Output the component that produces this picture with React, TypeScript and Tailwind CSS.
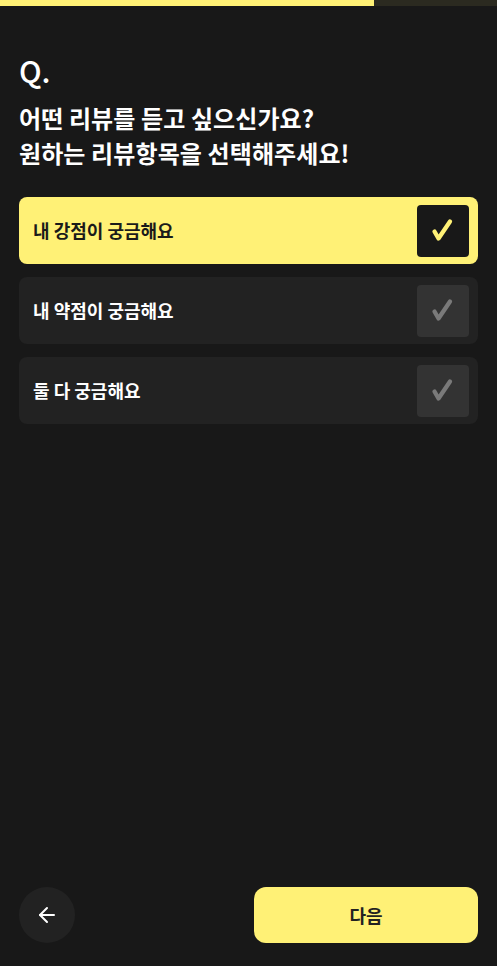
import React from "react";
import { ArrowLeft } from "lucide-react";

function Check({ color }: { color: string }) {
  return (
    <svg width="52" height="52" viewBox="0 0 52 52" fill="none">
      <path
        d="M17.5 26.5 L21.5 33.5 L33 16.5"
        stroke={color}
        strokeWidth="4.3"
        strokeLinecap="round"
        strokeLinejoin="round"
      />
    </svg>
  );
}

const options = [
  { label: "내 강점이 궁금해요", selected: true },
  { label: "내 약점이 궁금해요", selected: false },
  { label: "둘 다 궁금해요", selected: false },
];

export default function App() {
  return (
    <div
      className="w-[497px] h-[966px] bg-[#181818] flex flex-col"
      style={{ fontFamily: '"Noto Sans CJK KR", "Noto Sans", sans-serif' }}
    >
      <div className="flex h-[6px] w-full">
        <div className="w-[374px] bg-[#fff176]" />
        <div className="flex-1 bg-[#2b2a20]" />
      </div>
      <div className="px-[19px] flex flex-col flex-1">
        <div className="mt-[46px] text-[30px] leading-[36px] font-medium text-white">Q.</div>
        <div className="mt-[12px] text-[24px] leading-[35px] font-bold text-white tracking-[0.1px]">
          어떤 리뷰를 듣고 싶으신가요?
          <br />
          원하는 리뷰항목을 선택해주세요!
        </div>
        <div className="mt-[27px] flex flex-col gap-[13px]">
          {options.map((o) => (
            <div
              key={o.label}
              className={
                "h-[67px] rounded-[8px] flex items-center justify-between pl-[14px] pr-[9px] " +
                (o.selected ? "bg-[#fff176]" : "bg-[#222222]")
              }
            >
              <span
                className={
                  "text-[18px] font-bold " + (o.selected ? "text-[#1a1a1a]" : "text-white")
                }
              >
                {o.label}
              </span>
              <div
                className={
                  "w-[52px] h-[52px] rounded-[4px] flex items-center justify-center " +
                  (o.selected ? "bg-[#181818]" : "bg-[#333333]")
                }
              >
                <Check color={o.selected ? "#fff176" : "#7a7a7a"} />
              </div>
            </div>
          ))}
        </div>
        <div className="mt-auto mb-[23px] flex items-center justify-between">
          <button className="w-[56px] h-[56px] rounded-full bg-[#222222] flex items-center justify-center">
            <ArrowLeft size={24} color="#ffffff" strokeWidth={2} />
          </button>
          <button className="w-[224px] h-[56px] rounded-[12px] bg-[#fff176] flex items-center justify-center text-[18px] font-bold text-[#222222]">
            다음
          </button>
        </div>
      </div>
    </div>
  );
}
